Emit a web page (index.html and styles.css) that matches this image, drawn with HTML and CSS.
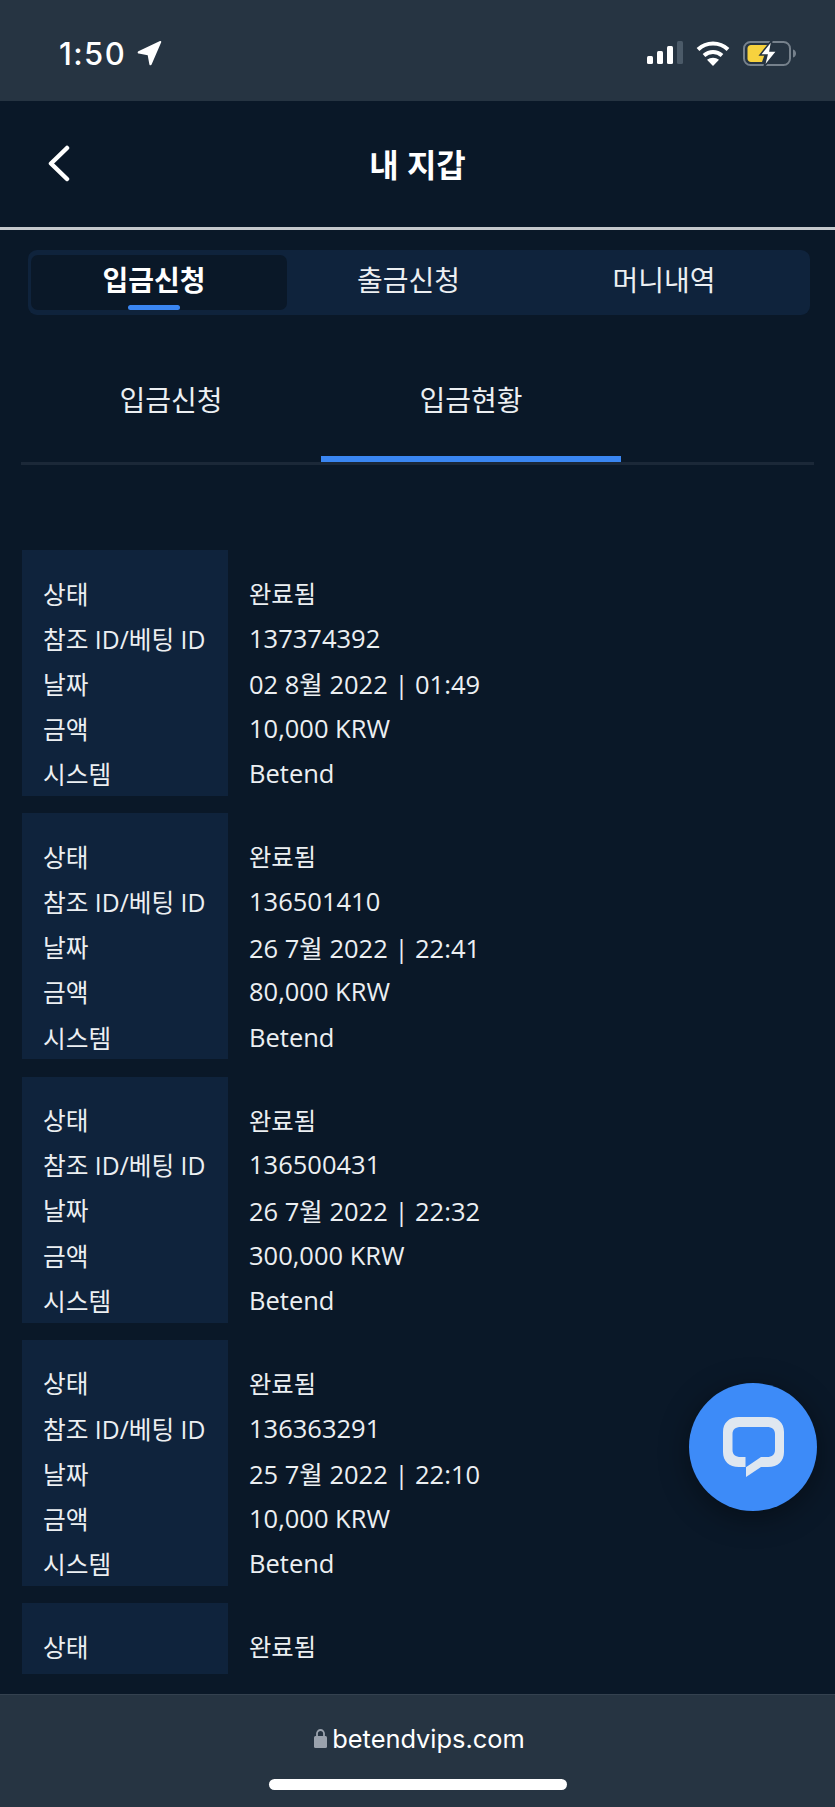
FILE: index.html
```html
<!DOCTYPE html>
<html lang="ko">
<head>
  <meta charset="UTF-8" />
  <meta name="viewport" content="width=device-width, initial-scale=1.0"/>
  <title>내 지갑 | Betend</title>
  <link rel="stylesheet" href="styles.css">
</head>
<body>
  <div class="app">

    <!-- iOS status bar -->
    <header class="status-bar">
      <div class="status-time">
        <span>1:50</span>
        <svg class="status-arrow" viewBox="0 0 25 25" width="25" height="25"><path fill="#fff" d="M24.200 1.200 14.600 23.600c-.5 1.100-2 .9-2.200-.2l-1.700-9.200-9-1.600c-1.200-.2-1.400-1.800-.3-2.300L23 .1c.8-.3 1.500.4 1.200 1.100z"/></svg>
      </div>
      <div class="status-icons">
        <svg viewBox="0 0 36 23" width="36" height="23">
          <rect x="0" y="15" width="6" height="8" rx="1.500" fill="#fff"/>
          <rect x="10" y="10" width="6" height="13" rx="1.500" fill="#fff"/>
          <rect x="20" y="5" width="6" height="18" rx="1.500" fill="#fff"/>
          <rect x="30" y="0" width="6" height="23" rx="1.500" fill="#4b5a68"/>
        </svg>
        <svg viewBox="0 0 34 25" width="34" height="25">
          <path fill="none" stroke="#fff" stroke-width="4" d="M2 8.500C10.500.5 23.500.5 32 8.500"/>
          <path fill="none" stroke="#fff" stroke-width="4" d="M8 14.500c5.300-4.600 12.700-4.600 18 0"/>
          <path fill="#fff" d="M17 25l-6-6.200c3.500-2.800 8.500-2.800 12 0z"/>
        </svg>
        <svg viewBox="0 0 54 27" width="54" height="27">
          <rect x="1" y="2" width="46" height="23" rx="6.500" fill="none" stroke="#76818c" stroke-width="2"/>
          <path fill="#f7d23e" d="M8 5h17l-6 17H8c-2 0-3.500-1.500-3.500-3.500v-10C4.500 6.500 6 5 8 5z"/>
          <path fill="#fff" stroke="#263442" stroke-width="1.500" d="M29 0 17 15h7l-3 12 13-16h-7z"/>
          <path fill="#76818c" d="M50 9.500c2 .5 3 2.200 3 4s-1 3.500-3 4z"/>
        </svg>
      </div>
    </header>

    <div class="page">
      <div class="top-bar">
        <button class="back-btn" aria-label="뒤로">
          <svg viewBox="0 0 25 37" width="25" height="37"><path fill="none" stroke="#fff" stroke-width="4.500" stroke-linecap="round" stroke-linejoin="round" d="M21 3 5 18.500 21 34"/></svg>
        </button>
        <h1>내 지갑</h1>
      </div>

      <nav class="wallet-tabs">
        <a class="wallet-tab active" href="#">입금신청</a>
        <a class="wallet-tab" href="#">출금신청</a>
        <a class="wallet-tab" href="#">머니내역</a>
      </nav>

      <nav class="sub-tabs">
        <a class="sub-tab" href="#">입금신청</a>
        <a class="sub-tab active" href="#">입금현황</a>
      </nav>

      <section class="records">
        <dl class="record">
          <dt>상태</dt><dd class="done">완료됨</dd>
          <dt>참조 ID/베팅 ID</dt><dd>137374392</dd>
          <dt>날짜</dt><dd>02 8월 2022 | 01:49</dd>
          <dt>금액</dt><dd>10,000 KRW</dd>
          <dt>시스템</dt><dd>Betend</dd>
        </dl>
        <dl class="record">
          <dt>상태</dt><dd class="done">완료됨</dd>
          <dt>참조 ID/베팅 ID</dt><dd>136501410</dd>
          <dt>날짜</dt><dd>26 7월 2022 | 22:41</dd>
          <dt>금액</dt><dd>80,000 KRW</dd>
          <dt>시스템</dt><dd>Betend</dd>
        </dl>
        <dl class="record">
          <dt>상태</dt><dd class="done">완료됨</dd>
          <dt>참조 ID/베팅 ID</dt><dd>136500431</dd>
          <dt>날짜</dt><dd>26 7월 2022 | 22:32</dd>
          <dt>금액</dt><dd>300,000 KRW</dd>
          <dt>시스템</dt><dd>Betend</dd>
        </dl>
        <dl class="record">
          <dt>상태</dt><dd class="done">완료됨</dd>
          <dt>참조 ID/베팅 ID</dt><dd>136363291</dd>
          <dt>날짜</dt><dd>25 7월 2022 | 22:10</dd>
          <dt>금액</dt><dd>10,000 KRW</dd>
          <dt>시스템</dt><dd>Betend</dd>
        </dl>
        <dl class="record record-last">
          <dt>상태</dt><dd class="done">완료됨</dd>
        </dl>
      </section>
    </div>

    <!-- Floating chat button -->
    <a class="chat-float" href="#" aria-label="채팅">
      <svg viewBox="0 0 61 60" width="61" height="60"><path fill="#dfe7f0" fill-rule="evenodd" d="M16 0h29c10 0 16 6 16 15v20c0 9-6 15-16 15h-7L23 60V50h-7C6 50 0 44 0 35V15C0 6 6 0 16 0zm2 10c-5.500 0-8.500 2.500-8.500 7v16c0 4.500 3 7 8.500 7h4.500v10h.8L38 40h6c5 0 8-2.500 8-7V17c0-4.500-3-7-8-7z"/></svg>
    </a>

    <!-- Safari address bar -->
    <footer class="browser-bar">
      <div class="browser-url">
        <svg viewBox="0 0 13 20" width="13" height="20"><path fill="none" stroke="#9aa2ad" stroke-width="1.800" d="M3 9V5.500a3.500 3.500 0 0 1 7 0V9"/><rect x="0" y="8" width="13" height="12" rx="1.500" fill="#9aa2ad"/></svg>
        <span>betendvips.com</span>
      </div>
      <div class="home-indicator"></div>
    </footer>
  </div>
</body>
</html>
```

FILE: styles.css
```css
:root {
  --bg: #0a1828;
  --panel: #0f233c;
  --bar: #263442;
  --blue: #3a86f2;
  --text: #eceff2;
}
* { box-sizing: border-box; margin: 0; padding: 0; }
body {
  background: var(--bg);
  color: var(--text);
  font-family: 'Open Sans', 'Noto Sans CJK KR', sans-serif;
  font-size: 25.5px;
}
a { color: inherit; text-decoration: none; }

.app {
  position: relative;
  display: flex;
  flex-direction: column;
  height: 1807px;
  overflow: hidden;
}

/* --- STATUS BAR --- */
.status-bar {
  flex: 0 0 101px;
  background: var(--bar);
  display: flex;
  justify-content: space-between;
  align-items: flex-start;
  padding: 41px 38px 0 59px;
}
.status-time {
  display: flex;
  align-items: center;
  gap: 11px;
  height: 25px;
  color: #fff;
  font-family: Inter, sans-serif;
  font-size: 31px;
  font-weight: 500;
  letter-spacing: 1.4px;
}
.status-icons { display: flex; align-items: flex-start; gap: 13px; }
.status-icons svg:last-child { margin-top: -1px; }

/* --- PAGE --- */
.page { flex: 1 1 auto; min-height: 0; overflow: hidden; }

.top-bar {
  position: relative;
  height: 129px;
  border-bottom: 3px solid #c4c8cc;
  display: flex;
  align-items: center;
  justify-content: center;
}
.top-bar h1 {
  color: #fff;
  font-size: 32px;
  font-weight: 700;
  margin-top: -3px;
}
.back-btn {
  position: absolute;
  left: 46px;
  top: 44px;
  background: none;
  border: none;
  display: block;
}
.back-btn svg { display: block; }

.wallet-tabs {
  display: flex;
  height: 65px;
  margin: 20px 25px 0 28px;
  padding: 5px 3px;
  background: var(--panel);
  border-radius: 9px;
}
.wallet-tab {
  position: relative;
  font-size: 28px;
  line-height: 50px;
  text-align: center;
}
.wallet-tab:nth-child(1) { width: 256px; padding-right: 10px; }
.wallet-tab:nth-child(2) { width: 243px; }
.wallet-tab:nth-child(3) { width: 268px; }
.wallet-tab.active {
  background: var(--bg);
  border-radius: 7px;
  color: #fff;
  font-weight: 700;
}
.wallet-tab.active::after {
  content: "";
  position: absolute;
  left: 97px;
  bottom: 0;
  width: 52px;
  height: 5px;
  border-radius: 3px;
  background: var(--blue);
}

.sub-tabs {
  display: flex;
  margin: 22px 21px 0 21px;
  border-bottom: 3px solid #1b2838;
  height: 128px;
}
.sub-tab {
  width: 300px;
  height: 125px;
  font-size: 28px;
  line-height: 127px;
  text-align: center;
}
.sub-tab.active { box-shadow: inset 0 -6px 0 var(--blue); }

/* --- RECORDS --- */
.records {
  display: flex;
  flex-direction: column;
  gap: 17.25px;
  margin: 85px 0 0 22px;
}
.record {
  display: grid;
  grid-template-columns: 206px 1fr;
  grid-auto-rows: 45.2px;
  align-items: center;
  height: 246px;
  padding-top: 20px;
  background: linear-gradient(var(--panel), var(--panel)) no-repeat left top / 206px 100%;
}
.record-last { height: 71px; }
.record dt { padding-left: 21px; font-size: 24.7px; white-space: nowrap; }
.record dd { padding-left: 21px; white-space: nowrap; }
.record .done { font-size: 24.3px; }

/* --- CHAT BUTTON --- */
.chat-float {
  position: absolute;
  left: 689px;
  top: 1383px;
  width: 128px;
  height: 128px;
  border-radius: 50%;
  background: #3d8bf8;
  box-shadow: 0 6px 30px #0006;
  display: flex;
  align-items: center;
  justify-content: center;
}

/* --- BROWSER BAR --- */
.browser-bar {
  flex: 0 0 113px;
  background: var(--bar);
  border-top: 1px solid #34414f;
  display: flex;
  flex-direction: column;
  align-items: center;
  padding-top: 31px;
}
.browser-url {
  display: flex;
  align-items: center;
  gap: 5px;
  height: 24px;
  margin-left: 4px;
  color: #fff;
  font-family: Inter, sans-serif;
  font-size: 25.4px;
}
.home-indicator {
  width: 298px;
  height: 11px;
  margin-top: 29px;
  border-radius: 6px;
  background: #fff;
}
```
